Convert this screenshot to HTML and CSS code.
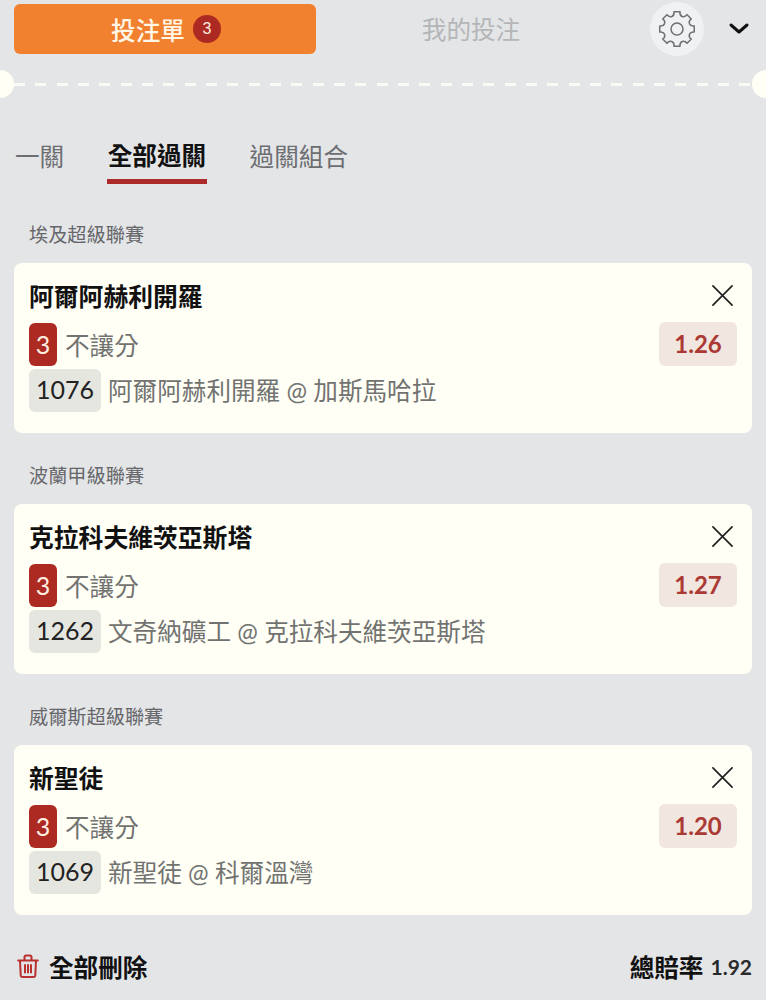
FILE: index.html
```html
<!DOCTYPE html>
<html lang="zh-Hant">
<head>
<meta charset="utf-8">
<title>投注單</title>
<link rel="stylesheet" href="styles.css">
</head>
<body>
<div class="page">
  <header class="top">
    <div class="slip-btn"><span>投注單</span><span class="count">3</span></div>
    <div class="my-bets">我的投注</div>
    <div class="gear">
      <svg width="36" height="36" viewBox="0 0 36 36" fill="none" stroke="#6f7074" stroke-width="1.5" stroke-linejoin="round"><path d="M14.96.77H21.04Q20.43 4.21 23.17 5.53Q26.03 6.53 28.04 3.66L32.34 7.96Q29.47 9.97 30.47 12.83Q31.79 15.57 35.23 14.96V21.04Q31.79 20.43 30.47 23.17Q29.47 26.03 32.34 28.04L28.04 32.34Q26.03 29.47 23.17 30.47Q20.43 31.79 21.04 35.23H14.96Q15.57 31.79 12.83 30.47Q9.97 29.47 7.96 32.34L3.66 28.04Q6.53 26.03 5.53 23.17Q4.21 20.43 .77 21.04V14.96Q4.21 15.57 5.53 12.83Q6.53 9.97 3.66 7.96L7.96 3.66Q9.97 6.53 12.83 5.53Q15.57 4.21 14.96.77Z"/><circle cx="18" cy="18" r="6"/></svg>
    </div>
    <svg class="chevron" width="22" height="14" viewBox="0 0 22 14" fill="none" stroke="#111" stroke-width="3" stroke-linecap="round" stroke-linejoin="round"><path d="M3 3l8 7 8-7"/></svg>
  </header>

  <div class="divider"></div>

  <nav class="tabs">
    <div class="tab">一關</div>
    <div class="tab active">全部過關</div>
    <div class="tab">過關組合</div>
  </nav>

  <section class="leg">
    <div class="league">埃及超級聯賽</div>
    <div class="card">
      <div class="title-row">
        <div class="title">阿爾阿赫利開羅</div>
        <svg class="close" width="24" height="24" viewBox="0 0 24 24" stroke="#222" stroke-width="1.8" stroke-linecap="round"><path d="M2 2l20 20M22 2L2 22"/></svg>
      </div>
      <div class="bet-row">
        <span class="num">3</span><span class="market">不讓分</span>
        <span class="odds">1.26</span>
      </div>
      <div class="match-row"><span class="code">1076</span><span class="match">阿爾阿赫利開羅 @ 加斯馬哈拉</span></div>
    </div>
  </section>

  <section class="leg">
    <div class="league">波蘭甲級聯賽</div>
    <div class="card">
      <div class="title-row">
        <div class="title">克拉科夫維茨亞斯塔</div>
        <svg class="close" width="24" height="24" viewBox="0 0 24 24" stroke="#222" stroke-width="1.8" stroke-linecap="round"><path d="M2 2l20 20M22 2L2 22"/></svg>
      </div>
      <div class="bet-row">
        <span class="num">3</span><span class="market">不讓分</span>
        <span class="odds">1.27</span>
      </div>
      <div class="match-row"><span class="code">1262</span><span class="match">文奇納礦工 @ 克拉科夫維茨亞斯塔</span></div>
    </div>
  </section>

  <section class="leg">
    <div class="league">威爾斯超級聯賽</div>
    <div class="card">
      <div class="title-row">
        <div class="title">新聖徒</div>
        <svg class="close" width="24" height="24" viewBox="0 0 24 24" stroke="#222" stroke-width="1.8" stroke-linecap="round"><path d="M2 2l20 20M22 2L2 22"/></svg>
      </div>
      <div class="bet-row">
        <span class="num">3</span><span class="market">不讓分</span>
        <span class="odds">1.20</span>
      </div>
      <div class="match-row"><span class="code">1069</span><span class="match">新聖徒 @ 科爾溫灣</span></div>
    </div>
  </section>

  <footer class="foot">
    <div class="delete">
      <svg width="22" height="26" viewBox="0 0 22 26" fill="none" stroke="#b9302e" stroke-width="2" stroke-linejoin="round" stroke-linecap="round"><path d="M1.2 7.5h19.6M7.5 7V4.2c0-1 .6-1.6 1.6-1.6h3.8c1 0 1.6.6 1.6 1.6V7M3 7.5l.7 14.8c.1 1 .8 1.7 1.8 1.7h11c1 0 1.7-.7 1.8-1.7L19 7.5M8 12v7.500M11 12v7.500M14 12v7.500"/></svg>
      <span>全部刪除</span>
    </div>
    <div class="total"><span class="total-label">總賠率</span><span class="total-val">1.92</span></div>
  </footer>
</div>
</body>
</html>
```
FILE: styles.css
```css
* { box-sizing: border-box; }
html, body { margin: 0; padding: 0; }
body {
  background: #e4e5e7;
  font-family: Lato, "Noto Sans CJK TC", sans-serif;
  color: #111;
}
.page { width: 766px; height: 1000px; overflow: hidden; position: relative; }

.top {
  display: flex;
  align-items: center;
  height: 58px;
  padding: 0 0 0 14px;
}
.slip-btn {
  width: 302px;
  height: 50px;
  background: #f1802f;
  border-radius: 6px;
  color: #fff6e6;
  font-size: 24.6px;
  font-weight: 500;
  display: flex;
  align-items: center;
  justify-content: center;
  gap: 8px;
  padding-left: 2px;
}
.count {
  width: 28px;
  height: 28px;
  border-radius: 50%;
  background: #ad2a22;
  color: #fdeee0;
  font-family: "Liberation Sans", sans-serif;
  font-size: 16px;
  font-weight: 400;
  display: flex;
  align-items: center;
  justify-content: center;
}
.my-bets {
  width: 310px;
  text-align: center;
  font-size: 24.6px;
  color: #b4b5b7;
  padding-bottom: 2px;
}
.gear {
  width: 54px;
  height: 54px;
  margin-left: 24px;
  border-radius: 50%;
  background: #f0f1f2;
  display: flex;
  align-items: center;
  justify-content: center;
}
.chevron { margin-left: 24px; }

.divider {
  position: relative;
  height: 3px;
  margin-top: 25px;
  background: repeating-linear-gradient(90deg, #fbfbf6 0 11px, transparent 11px 21.33px);
  background-position: 14px 0;
}
.divider::before, .divider::after {
  content: "";
  position: absolute;
  top: -13px;
  width: 28px;
  height: 28px;
  border-radius: 50%;
  background: #fffff6;
}
.divider::before { left: -14px; }
.divider::after { right: -14px; }

.tabs {
  display: flex;
  gap: 43px;
  height: 45px;
  padding-left: 15px;
  margin-top: 53px;
}
.tab {
  height: 45px;
  font-size: 24.6px;
  line-height: 36px;
  color: #6d6e72;
  border-bottom: 5px solid transparent;
}
.tab.active {
  color: #111;
  font-weight: 700;
  line-height: 33px;
  border-bottom-color: #ad2a2a;
  padding: 0 0.5px;
}

.leg { padding: 0 14px; }
.leg:first-of-type { margin-top: 37px; }
.league {
  height: 28px;
  padding-left: 15px;
  font-size: 19.2px;
  line-height: 28px;
  color: #66676b;
  margin-bottom: 14px;
}
.leg + .leg { margin-top: 29px; }
.card {
  width: 738px;
  height: 170px;
  background: #fffff6;
  border-radius: 8px;
  padding: 13px 15px 0;
}
.title-row {
  display: flex;
  justify-content: space-between;
  align-items: center;
  height: 38px;
  padding-right: 3px;
}
.title { font-size: 24.8px; font-weight: 700; color: #111; }
.close { flex: none; width: 23px; height: 23px; margin-top: 1px; }
.bet-row {
  display: flex;
  align-items: center;
  height: 44px;
  margin-top: 8px;
}
.num {
  width: 28px;
  height: 43px;
  margin-top: 1px;
  padding-bottom: 2px;
  border-radius: 6px;
  background: #ad2a22;
  color: #fdeee0;
  font-size: 25px;
  display: flex;
  align-items: center;
  justify-content: center;
}
.market { margin-left: 8px; font-size: 24.6px; color: #727371; padding-bottom: 1px; }
.odds {
  margin-left: auto;
  width: 78px;
  height: 44px;
  padding-bottom: 1px;
  border-radius: 6px;
  background: #f1e6e0;
  color: #ab3a34;
  font-size: 24px;
  font-weight: 700;
  display: flex;
  align-items: center;
  justify-content: center;
}
.match-row {
  display: flex;
  align-items: center;
  margin-top: 3px;
  height: 43px;
}
.code {
  width: 72px;
  height: 43px;
  padding-bottom: 3px;
  border-radius: 6px;
  background: #e6e6e0;
  color: #222;
  font-size: 25px;
  display: flex;
  align-items: center;
  justify-content: center;
}
.match { margin-left: 7px; font-size: 24.6px; color: #727371; white-space: nowrap; padding-bottom: 4px; }

.foot {
  display: flex;
  justify-content: space-between;
  align-items: center;
  padding: 0 14px 0 17px;
  margin-top: 30px;
  height: 42px;
}
.delete { display: flex; align-items: center; gap: 10px; font-size: 24.6px; font-weight: 700; color: #111; }
.total { display: flex; align-items: center; gap: 7px; }
.total-label { font-size: 24.6px; font-weight: 700; color: #111; }
.total-val { font-size: 21px; font-weight: 700; color: #2a2a2c; }
```
